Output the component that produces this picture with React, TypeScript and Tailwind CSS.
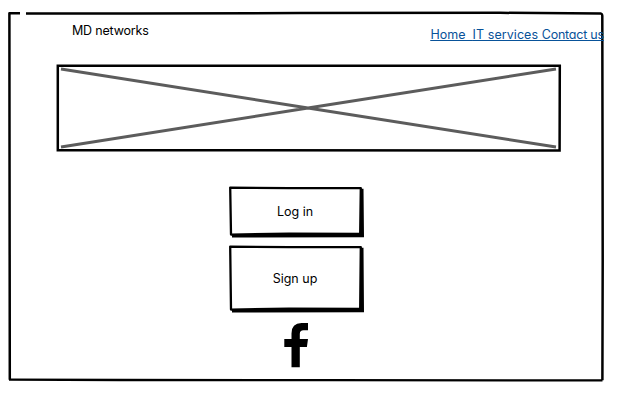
const font = "font-['Inter','Liberation_Sans',sans-serif] [font-feature-settings:'cv11']";

function PageOutline() {
  return (
    <svg className="pointer-events-none absolute inset-0" width="628" height="405" fill="none" stroke="#000" strokeLinejoin="round">
      <path d="M20 13.2 H9.4 L9.5 130 L9.8 379.8" strokeWidth="2.5" />
      <path d="M26 13.4 L130 13.6 L300 13 L500 12.8 L601 13.600 Q602.500 14 602.300 17 L602.500 130 L602.700 260 L602.400 380.300" strokeWidth="2.500" />
      <path d="M9 379.600 L120 380 L330 380.200 L602.500 380.400" strokeWidth="2.300" />
    </svg>
  );
}

function Banner() {
  return (
    <div className="ml-[57px] mt-[22px] h-[87px] w-[504px]">
      <svg className="overflow-visible" width="504" height="87" fill="none">
        <path d="M4 4 L251 43 L499 82 M4 82 L251 43 L499 4" stroke="#5c5c5c" strokeWidth="3" />
        <path d="M0.800 0.700 L300 0.800 L502.800 0.800 L502.600 85.400 L0.800 85.200 Z" stroke="#000" strokeWidth="2.500" />
      </svg>
    </div>
  );
}

function SketchButton({ label, tall = false }: { label: string; tall?: boolean }) {
  const h = tall ? 67 : 51;
  return (
    <button className={`relative flex w-[136px] items-center justify-center pr-[4px] pb-[2px] ${tall ? "h-[67px]" : "h-[51px]"}`}>
      <svg className="absolute inset-0 overflow-visible" width="136" height={h} fill="none">
        <path d={`M132 1.800 H134.500 L135 ${h - 0.8} L3 ${h - 0.4} V${h - 4} H131 Z`} fill="#000" />
        <path d={`M1.200 0.600 L60 1.200 L131.800 1.200 L131.200 ${h - 4.2} L60 ${h - 4.4} L2 ${h - 3.4} Z`} fill="#fff" stroke="#000" strokeWidth="2.300" strokeLinejoin="round" />
      </svg>
      <span className="relative text-[12.5px] leading-4">{label}</span>
    </button>
  );
}

function FacebookIcon() {
  return (
    <svg className="ml-[284px] mt-[9px]" width="25" height="46" viewBox="0 -1 25 46">
      <path d="M24 0 V7.300 H19.500 Q15.800 7.300 15.800 11 V16 H24 L22.900 24 H15.800 V44.200 H7.500 V24 H0.300 V16 H7.500 V10.500 Q7.500 0 17.500 0 Z" />
    </svg>
  );
}

export default function App() {
  return (
    <main className={`relative h-[405px] w-[628px] overflow-hidden bg-white text-black ${font}`}>
      <PageOutline />
      <header className="relative flex h-[43px] items-start justify-between pl-[72px] pr-[24.5px] text-[12.5px] leading-4">
        <span className="mt-[23px] tracking-[-0.18px]">MD networks</span>
        <nav className="mt-[27px] w-[173px] whitespace-pre text-[#085299] underline decoration-1 underline-offset-1">
          <a>Home  </a><a className="tracking-[0.07px]">IT services </a><a className="tracking-[-0.22px]">Contact us</a>
        </nav>
      </header>
      <Banner />
      <div className="ml-[229px] mt-[35px] flex flex-col items-start gap-2">
        <SketchButton label="Log in" />
        <SketchButton label="Sign up" tall />
      </div>
      <FacebookIcon />
    </main>
  );
}
